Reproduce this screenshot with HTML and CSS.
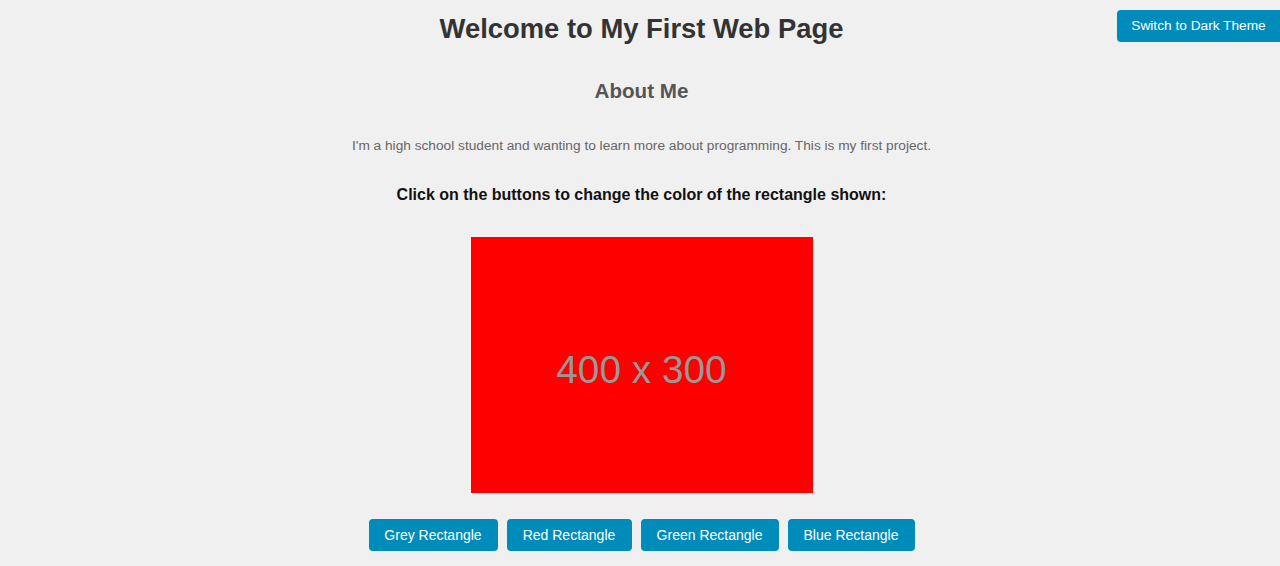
FILE: index.html
```html
<!DOCTYPE html>
<html>
<head>
<meta charset="utf-8">
<title>My First Web Page</title>
<link rel="stylesheet" href="styles.css">
</head>
<body>
<button class="theme-btn">Switch to Dark Theme</button>
<header class="page-header">
  <h1 class="title">Welcome to My First Web Page</h1>
</header>
<main class="content">
  <h2 class="subtitle">About Me</h2>
  <p class="intro">I'm a high school student and wanting to learn more about programming. This is my first project.</p>
  <p class="prompt">Click on the buttons to change the color of the rectangle shown:</p>
  <div class="rect"><span class="rect-label">400 x 300</span></div>
  <div class="btn-row">
    <button class="btn btn-grey">Grey Rectangle</button>
    <button class="btn btn-red">Red Rectangle</button>
    <button class="btn btn-green">Green Rectangle</button>
    <button class="btn btn-blue">Blue Rectangle</button>
  </div>
</main>
</body>
</html>
```
FILE: styles.css
```css
html, body {
  margin: 0;
  padding: 0;
}
body {
  background: #f0f0f0;
  font-family: "Liberation Sans", Arial, sans-serif;
  height: 566px;
  overflow: hidden;
  position: relative;
}
.theme-btn {
  position: absolute;
  top: 10px;
  right: 0;
  width: 163px;
  height: 32px;
  background: #008cba;
  color: #fff;
  border: none;
  border-radius: 4px 0 0 4px;
  font-family: "Liberation Sans", Arial, sans-serif;
  font-size: 13.7px;
  line-height: 30px;
  padding: 0;
}
.page-header {
  display: flex;
  justify-content: center;
  padding-top: 12px;
  padding-left: 3px;
}
.title {
  margin: 0;
  font-size: 27.4px;
  font-weight: bold;
  color: #333;
  line-height: 34px;
}
.content {
  display: flex;
  flex-direction: column;
  align-items: center;
  padding-left: 3px;
}
.subtitle {
  margin: 33px 0 0;
  font-size: 20.6px;
  font-weight: bold;
  color: #555;
  line-height: 24px;
}
.intro {
  margin: 34px 0 0;
  font-size: 13.7px;
  color: #666;
  line-height: 18px;
}
.prompt {
  margin: 30px 0 0;
  font-size: 16px;
  font-weight: bold;
  color: #111;
  line-height: 20px;
}
.rect {
  margin-top: 32px;
  width: 342px;
  height: 256px;
  background: #ff0000;
  display: flex;
  align-items: center;
  justify-content: center;
}
.rect-label {
  color: #999;
  font-size: 38.8px;
  margin-top: 10px;
}
.btn-row {
  margin-top: 26px;
  display: flex;
  gap: 9px;
}
.btn {
  height: 32px;
  background: #008cba;
  color: #fff;
  border: none;
  border-radius: 4px;
  font-family: "Liberation Sans", Arial, sans-serif;
  font-size: 14px;
  line-height: 30px;
  padding: 0;
}
.btn-grey { width: 129px; }
.btn-red { width: 125px; }
.btn-green { width: 138px; }
.btn-blue { width: 127px; }
```
